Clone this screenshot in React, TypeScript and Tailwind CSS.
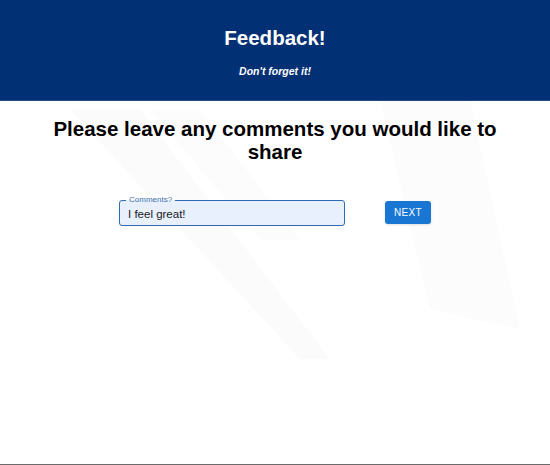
import { useState } from "react";

export default function App() {
  const [comment, setComment] = useState("I feel great!");

  return (
    <div
      className="relative flex h-[465px] flex-col overflow-hidden border-b border-[#6b6b6b] bg-white"
      style={{ fontFamily: '"Liberation Sans", Arial, sans-serif' }}
    >
      {/* faint backdrop stripes */}
      <svg
        className="pointer-events-none absolute inset-0 h-full w-full"
        viewBox="0 0 550 465"
        preserveAspectRatio="none"
      >
        <polygon points="70,110 140,110 330,360 300,360" fill="#fbfbfb" />
        <polygon points="150,110 200,110 300,240 260,240" fill="#fcfcfc" />
        <polygon points="380,100 470,100 520,330 430,310" fill="#fcfcfc" />
      </svg>

      {/* Header */}
      <header className="relative flex h-[101px] flex-col items-center border-b border-[#1c4a85] bg-[#023075] pt-[24px]">
        <h1 className="text-[20.5px] font-bold leading-[28px] text-white">Feedback!</h1>
        <p className="mt-[12px] text-[10.5px] font-bold italic leading-[14px] text-white">
          Don&apos;t forget it!
        </p>
      </header>

      {/* Body */}
      <main className="relative flex flex-col items-center">
        <h2 className="mt-[16px] w-[460px] text-center text-[20.5px] font-bold leading-[23px] text-black">
          Please leave any comments you would like to share
        </h2>

        <div className="mt-[37px] flex items-start gap-[40px]">
          <label className="relative block h-[26px] w-[226px] rounded-[3px] border border-[#2e6bb3] bg-[#e8f0fe]">
            <span className="absolute -top-[6px] left-[6px] bg-[linear-gradient(to_bottom,white_50%,#e8f0fe_50%)] px-[3px] text-[8px] leading-[10px] text-[#3b6fb0]">
              Comments?
            </span>
            <input
              value={comment}
              onChange={(e) => setComment(e.target.value)}
              className="h-full w-full bg-transparent px-[8px] pt-[1px] text-[11.5px] text-[#1a1a1a] outline-none"
            />
          </label>
          <button className="mt-[1px] h-[23px] w-[46px] rounded-[3px] bg-[#1976d2] text-[10px] font-medium tracking-[0.3px] text-white shadow-sm">
            NEXT
          </button>
        </div>
      </main>
    </div>
  );
}
